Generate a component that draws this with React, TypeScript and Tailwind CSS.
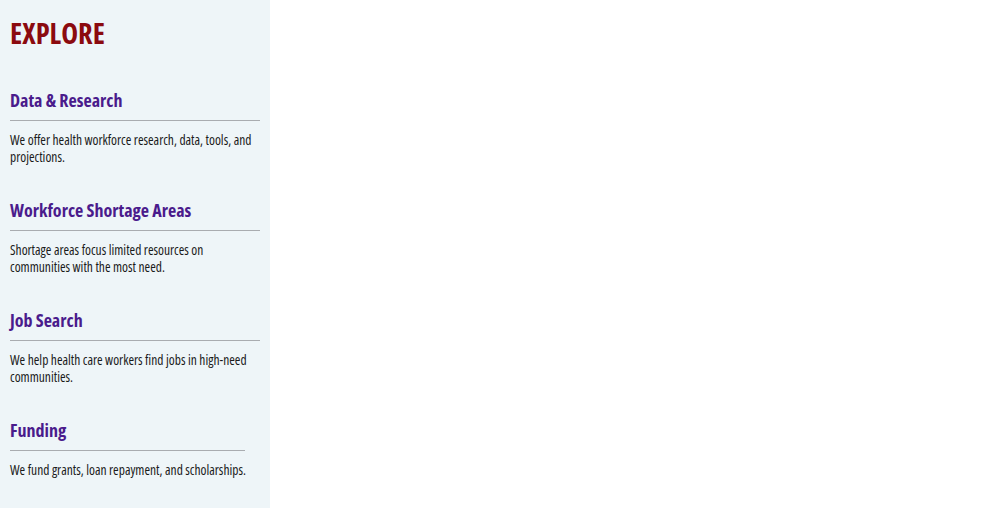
const sections = [
  {
    title: "Data & Research",
    body: "We offer health workforce research, data, tools, and projections.",
  },
  {
    title: "Workforce Shortage Areas",
    body: "Shortage areas focus limited resources on communities with the most need.",
  },
  {
    title: "Job Search",
    body: "We help health care workers find jobs in high-need communities.",
  },
]

export default function App() {
  return (
    <div className="flex h-[508px] w-[1000px] bg-white font-['Open_Sans',sans-serif] font-stretch-condensed">
      <aside className="w-[270px] bg-[#eef5f8] px-[10px] pt-[17px]">
        <h2 className="text-[28.5px] font-bold leading-[32px] text-[#8b0a0f]">EXPLORE</h2>
        <div className="mt-[39px] flex flex-col gap-[32px]">
          {sections.map((s) => (
            <section key={s.title}>
              <h3 className="text-[18px] font-bold leading-[24px] text-[#4a1b8c]">{s.title}</h3>
              <hr className="mt-[8px] border-t border-[#a9acb0]" />
              <p className="mt-[11px] text-[13.5px] leading-[17px] text-[#1b1b1b]">{s.body}</p>
            </section>
          ))}
          <section className="w-[235px]">
            <h3 className="text-[18px] font-bold leading-[24px] text-[#4a1b8c]">Funding</h3>
            <hr className="mt-[8px] border-t border-[#a9acb0]" />
            <p className="mt-[11px] whitespace-nowrap text-[13.5px] leading-[17px] text-[#1b1b1b]">
              We fund grants, loan repayment, and scholarships.
            </p>
          </section>
        </div>
      </aside>
      <main className="flex-1" />
    </div>
  )
}
